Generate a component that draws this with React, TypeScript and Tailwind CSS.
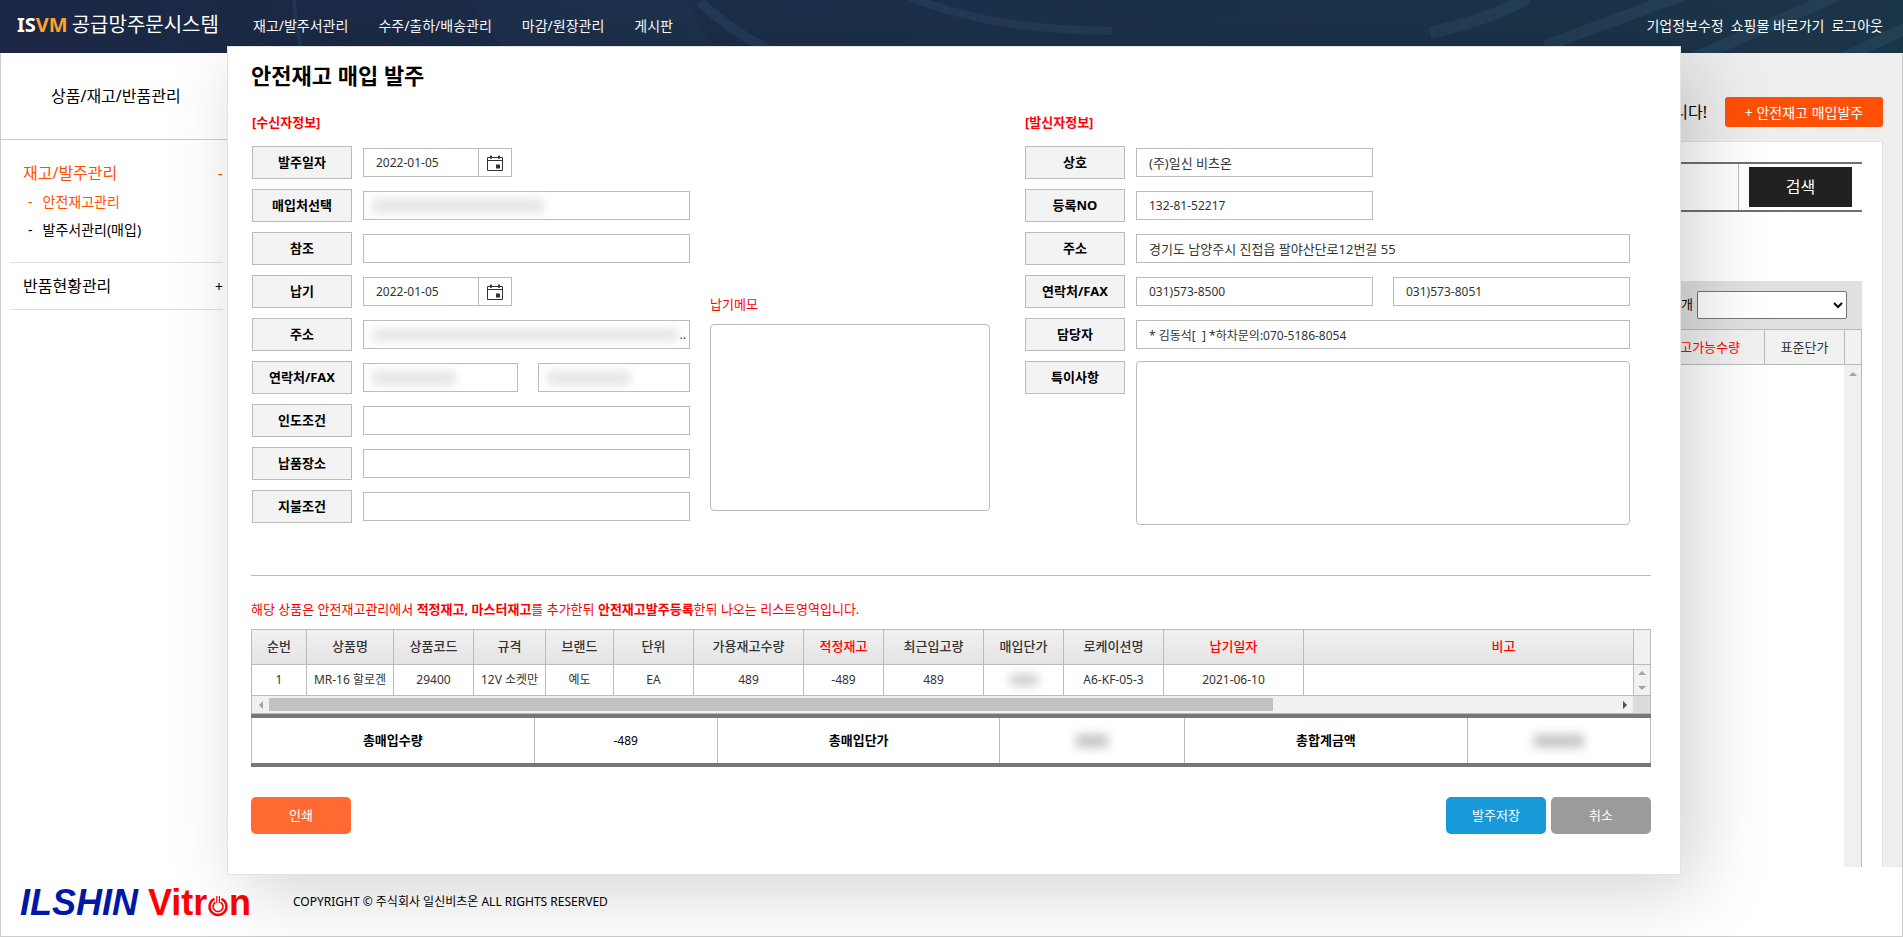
import type { ReactNode } from "react";

const field =
  "h-[29px] border border-[#bbb] bg-white px-3 text-[#333] outline-none";

function Caption({ htmlFor, children }: { htmlFor: string; children: ReactNode }) {
  return (
    <label
      htmlFor={htmlFor}
      className="flex h-[33px] w-[100px] shrink-0 items-center justify-center border border-[#bbb] bg-[#f3f3f3] text-[13px] font-bold text-black"
    >
      {children}
    </label>
  );
}

function Row({ id, label, children }: { id: string; label: string; children: ReactNode }) {
  return (
    <div className="flex items-center gap-[11px]">
      <Caption htmlFor={id}>{label}</Caption>
      {children}
    </div>
  );
}

function CalendarIcon() {
  return (
    <svg width="16" height="16" viewBox="0 0 16 16" fill="none" stroke="#333" aria-hidden="true">
      <path d="M0.5 2.5h15v13h-15zM0.5 5.5h15" />
      <path d="M4 0.5v3.5M12 0.5v3.5" strokeWidth="1.5" />
      <path d="M3 1.5h2M11 1.5h2" />
      <path d="M9 9.5h4v4H9z" fill="#333" stroke="none" />
    </svg>
  );
}

function DateField({ id, label }: { id: string; label: string }) {
  return (
    <div className="flex">
      <input id={id} className={`${field} w-[116px] text-[12px]`} defaultValue="2022-01-05" />
      <button
        type="button"
        aria-label={`${label} 달력`}
        className="flex h-[29px] w-[33px] items-center justify-center border border-l-0 border-[#bbb] bg-white"
      >
        <CalendarIcon />
      </button>
    </div>
  );
}

function Masked({ className }: { className: string }) {
  return <span className={`block rounded-sm bg-[#e8e8e8] blur-[4px] ${className}`} />;
}

function MaskedInput({
  id,
  label,
  className,
  mask,
  tail,
}: {
  id: string;
  label?: string;
  className: string;
  mask: string;
  tail?: string;
}) {
  return (
    <div className={`flex h-[29px] items-center border border-[#bbb] bg-white pl-2 ${className}`}>
      <Masked className={mask} />
      {tail && <span className="ml-auto pr-[3px] text-[12px] text-[#333]">{tail}</span>}
      <input id={id} aria-label={label} className="w-0 min-w-0 outline-none" />
    </div>
  );
}

function Arrow({ dir, dark }: { dir: "up" | "down" | "left" | "right"; dark?: boolean }) {
  const paths = {
    up: "M0 6l4-4 4 4z",
    down: "M0 2l4 4 4-4z",
    left: "M6 0l-4 4 4 4z",
    right: "M2 0l4 4-4 4z",
  };
  return (
    <svg width="8" height="8" viewBox="0 0 8 8" fill={dark ? "#505050" : "#a3a3a3"} aria-hidden="true">
      <path d={paths[dir]} />
    </svg>
  );
}

const columns: { name: string; width: string; red?: boolean; value: ReactNode }[] = [
  { name: "순번", width: "w-[55px]", value: "1" },
  { name: "상품명", width: "w-[87px]", value: "MR-16 할로겐" },
  { name: "상품코드", width: "w-[80px]", value: "29400" },
  { name: "규격", width: "w-[72px]", value: "12V 소켓만" },
  { name: "브랜드", width: "w-[68px]", value: "예도" },
  { name: "단위", width: "w-[80px]", value: "EA" },
  { name: "가용재고수량", width: "w-[110px]", value: "489" },
  { name: "적정재고", width: "w-[80px]", red: true, value: "-489" },
  { name: "최근입고량", width: "w-[100px]", value: "489" },
  {
    name: "매입단가",
    width: "w-[80px]",
    value: <span className="mx-auto block h-[12px] w-[28px] bg-[#d0d0d0] blur-[5px]" />,
  },
  { name: "로케이션명", width: "w-[100px]", value: "A6-KF-05-3" },
  { name: "납기일자", width: "w-[140px]", red: true, value: "2021-06-10" },
];

function Header() {
  const menu = ["재고/발주서관리", "수주/출하/배송관리", "마감/원장관리", "게시판"];
  return (
    <header className="relative h-[53px] bg-linear-to-r from-[#1b2744] via-[#1b304a] to-[#1b3548]">
      <svg
        className="absolute inset-0 h-full w-full"
        viewBox="0 0 1903 53"
        preserveAspectRatio="none"
        fill="none"
        stroke="#5f83a8"
        strokeOpacity="0.13"
        aria-hidden="true"
      >
        <path d="M294 0q2 25 8 53" strokeWidth="4" />
        <path d="M470 0l36 53h210l-30-53z" fill="#3f74a0" fillOpacity="0.06" stroke="none" />
        <path d="M700 2q30 28 74 51" strokeWidth="10" />
        <path d="M908 -4q80 34 204 35" strokeWidth="8" />
        <path d="M1545 46l140-52M1430 33q60-14 98-35" strokeWidth="12" />
        <path d="M1690 60l150-66M1840 60l70-34" strokeWidth="12" />
      </svg>
      <div className="relative flex h-[50px] items-center pl-[17px] pr-5 text-[14px] text-white">
        <a href="#home" className="flex w-[236px] gap-1 whitespace-nowrap text-[20px]">
          <strong>
            IS<span className="text-[#fda22c]">VM</span>
          </strong>
          공급망주문시스템
        </a>
        <nav className="flex gap-[30px]">
          {menu.map((m) => (
            <a key={m} href="#menu">
              {m}
            </a>
          ))}
        </nav>
        <div className="ml-auto flex gap-[7px]">
          <a href="#company">기업정보수정</a>
          <a href="#shop">쇼핑몰 바로가기</a>
          <a href="#logout">로그아웃</a>
        </div>
      </div>
    </header>
  );
}

function Sidebar() {
  return (
    <aside className="w-[226px] shrink-0 bg-white text-black">
      <h2 className="flex h-[87px] items-center border-b border-[#ccc] pl-[50px] text-[16px]">
        상품/재고/반품관리
      </h2>
      <div className="ml-[9px] mr-1 border-b border-[#e0e0e0] pb-[18px] pt-[21px]">
        <div className="flex h-6 items-center justify-between pl-[13px] text-[16px] text-[#ff4e00]">
          <a href="#stock">재고/발주관리</a>
          <span>-</span>
        </div>
        <ul className="pt-[3px] text-[14px] leading-7">
          <li className="pl-[18px] text-[#ff4e00]">
            -<a href="#safe" className="ml-[10px]">안전재고관리</a>
          </li>
          <li className="pl-[18px]">
            -<a href="#orders" className="ml-[10px]">발주서관리(매입)</a>
          </li>
        </ul>
      </div>
      <div className="ml-[9px] mr-1 flex h-[47px] items-center justify-between border-b border-[#e0e0e0] pl-[13px] text-[16px]">
        <a href="#returns">반품현황관리</a>
        <span className="text-[14px]">+</span>
      </div>
    </aside>
  );
}

function Background() {
  return (
    <main className="flex min-w-0 flex-1 flex-col bg-[#eee] pl-5 pr-[19px]">
      <div className="flex h-[88px] items-end justify-end gap-[18px] pb-[14px]">
        <p className="text-[16px] leading-[30px] text-black">안전재고를 관리하는 페이지입니다!</p>
        <button type="button" className="h-[30px] w-[158px] rounded-[3px] bg-[#ff5005] text-[14px] text-white">
          + 안전재고 매입발주
        </button>
      </div>
      <section className="flex flex-1 flex-col border border-b-0 border-[#e3e3e3] bg-white px-5 pt-5">
        <div className="flex h-[50px] items-stretch border-y-2 border-[#707070]">
          <input aria-label="검색어" className="min-w-0 flex-1 border-r border-[#bbb] outline-none" />
          <div className="flex items-center px-[10px]">
            <button type="button" className="h-10 w-[103px] bg-[#212121] text-[16px] text-white">
              검색
            </button>
          </div>
        </div>
        <div className="mt-[69px] flex h-12 items-center justify-end gap-1 bg-[#e0e0e0] pr-[15px] text-[13px]">
          <span>
            총 <span className="text-[#f00]">0</span>개
          </span>
          <select aria-label="정렬" className="h-7 w-[150px] rounded-xs border border-[#767676] bg-white" />
        </div>
        <div className="flex flex-1 flex-col border-x border-t border-[#bbb]">
          <div className="flex h-[35px] justify-end border-b border-[#bbb] bg-[#f1f1f1] text-[13px] leading-[34px]">
            <span className="w-[110px] border-r border-[#bbb] pr-6 text-right text-[#f00]">재고가능수량</span>
            <span className="w-20 border-r border-[#bbb] text-center text-[#333]">표준단가</span>
            <span className="w-4" />
          </div>
          <div className="ml-auto flex w-[17px] flex-1 justify-center bg-[#f0f0f0] pt-[5px]">
            <Arrow dir="up" />
          </div>
        </div>
      </section>
    </main>
  );
}

function Logo() {
  return (
    <svg
      width="234"
      height="50"
      viewBox="0 0 234 50"
      role="img"
      aria-label="ILSHIN Vitron"
      fontFamily="Liberation Sans, sans-serif"
      fontWeight="bold"
    >
      <text x="0" y="38" fontSize="36" fontStyle="italic" fill="#0019a5">
        ILSHIN
      </text>
      <g fill="#f00" fontSize="36">
        <text x="128" y="38">
          Vitr
        </text>
        <text x="209" y="38">
          n
        </text>
      </g>
      <g fill="none" stroke="#f00">
        <path d="M194.5 21.8a8.5 8.5 0 1 0 7 0" strokeWidth="2.4" />
        <path d="M195.5 25.3a5 5 0 1 0 5 0" strokeWidth="1.6" />
        <path d="M196.8 19v7M199.4 19v7" strokeWidth="1.2" />
      </g>
    </svg>
  );
}

function Summary() {
  return (
    <table className="w-full table-fixed border-collapse border-y-4 border-[#777] text-center text-black">
      <colgroup>
        <col className="w-[20.2%]" />
        <col className="w-[13.1%]" />
        <col className="w-[20.2%]" />
        <col className="w-[13.2%]" />
        <col className="w-[20.2%]" />
        <col />
      </colgroup>
      <tbody>
        <tr className="h-[49px]">
          <th className="border-x border-[#bbb] text-[13px]">총매입수량</th>
          <td className="border-x border-[#bbb] text-[12px]">-489</td>
          <th className="border-x border-[#bbb] text-[13px]">총매입단가</th>
          <td className="border-x border-[#bbb]">
            <span className="mx-auto block h-[14px] w-[32px] bg-[#c8c8c8] blur-[5px]" />
          </td>
          <th className="border-x border-[#bbb] text-[13px]">총합계금액</th>
          <td className="border-x border-[#bbb]">
            <span className="mx-auto block h-[14px] w-[50px] bg-[#c8c8c8] blur-[5px]" />
          </td>
        </tr>
      </tbody>
    </table>
  );
}

function OrderTable() {
  return (
    <div>
      <table className="w-full table-fixed border-collapse border border-[#bbb] text-center text-[#333]">
        <thead>
          <tr className="h-[35px] bg-linear-to-b from-[#f1f1f1] to-[#e5e3e4] text-[13px]">
            {columns.map((c) => (
              <th
                key={c.name}
                className={`border border-[#bbb] font-medium ${c.width} ${c.red ? "text-[#f00]" : ""}`}
              >
                {c.name}
              </th>
            ))}
            <th className="border border-[#bbb] pl-[70px] font-medium text-[#f00]">비고</th>
            <th className="w-[17px] border border-[#bbb] bg-[#f1f1f1]" />
          </tr>
        </thead>
        <tbody>
          <tr className="h-[31px] text-[12px]">
            {columns.map((c) => (
              <td key={c.name} className="overflow-hidden whitespace-nowrap border border-[#bbb]">
                {c.value}
              </td>
            ))}
            <td className="border border-[#bbb]" />
            <td className="bg-[#f1f1f1]">
              <div className="flex flex-col items-center gap-[7px]">
                <Arrow dir="up" />
                <Arrow dir="down" />
              </div>
            </td>
          </tr>
        </tbody>
      </table>
      <div className="flex h-[18px] items-center border-x border-b border-[#bbb] bg-[#f1f1f1]">
        <span className="flex w-[17px] justify-center">
          <Arrow dir="left" />
        </span>
        <div className="flex-1">
          <div className="h-[13px] w-[74.5%] bg-[#c1c1c1]" />
        </div>
        <span className="flex w-[17px] justify-center">
          <Arrow dir="right" dark />
        </span>
        <span className="h-full w-[17px] bg-[#dcdcdc]" />
      </div>
      <Summary />
    </div>
  );
}

function OrderDialog() {
  return (
    <div
      role="dialog"
      aria-labelledby="dialog-title"
      className="absolute left-[227px] right-[222px] top-[46px] border border-[#e3e3e3] bg-white pb-10 pl-[23px] pr-[29px] pt-[9px] shadow-[15px_15px_70px_rgba(0,0,0,0.18)]"
    >
      <h1 id="dialog-title" className="text-[22px] font-bold leading-[38px] text-black">
        안전재고 매입 발주
      </h1>
      <div className="flex pt-[18px]">
        <section className="flex w-[439px] shrink-0 flex-col gap-[10px] pl-px">
          <h3 className="mb-1 text-[13px] font-bold leading-5 text-[#f00]">[수신자정보]</h3>
          <Row id="order-date" label="발주일자">
            <DateField id="order-date" label="발주일자" />
          </Row>
          <Row id="vendor" label="매입처선택">
            <MaskedInput id="vendor" className="flex-1" mask="h-[16px] w-[172px]" />
          </Row>
          <Row id="ref" label="참조">
            <input id="ref" className={`${field} flex-1`} />
          </Row>
          <Row id="due" label="납기">
            <DateField id="due" label="납기" />
          </Row>
          <Row id="addr" label="주소">
            <MaskedInput id="addr" className="flex-1" mask="h-[14px] w-[306px]" tail=".." />
          </Row>
          <Row id="tel" label="연락처/FAX">
            <div className="flex flex-1 gap-5">
              <MaskedInput id="tel" className="w-[155px]" mask="h-[16px] w-[84px]" />
              <MaskedInput id="fax" label="FAX" className="flex-1" mask="h-[16px] w-[84px]" />
            </div>
          </Row>
          <Row id="terms" label="인도조건">
            <input id="terms" className={`${field} flex-1`} />
          </Row>
          <Row id="place" label="납품장소">
            <input id="place" className={`${field} flex-1`} />
          </Row>
          <Row id="pay" label="지불조건">
            <input id="pay" className={`${field} flex-1`} />
          </Row>
        </section>
        <section className="ml-5 flex w-[280px] flex-col pt-[182px]">
          <label htmlFor="memo" className="text-[13px] leading-5 text-[#f00]">
            납기메모
          </label>
          <textarea id="memo" className="mt-[10px] h-[187px] resize-none rounded-[4px] border border-[#bbb] outline-none" />
        </section>
        <section className="ml-[35px] mr-[21px] flex min-w-0 flex-1 flex-col gap-[10px]">
          <h3 className="mb-1 text-[13px] font-bold leading-5 text-[#f00]">[발신자정보]</h3>
          <Row id="company" label="상호">
            <input id="company" className={`${field} w-[237px] text-[13px]`} defaultValue="(주)일신 비츠온" />
          </Row>
          <Row id="regno" label="등록NO">
            <input id="regno" className={`${field} w-[237px] text-[12px]`} defaultValue="132-81-52217" />
          </Row>
          <Row id="sender-addr" label="주소">
            <input
              id="sender-addr"
              className={`${field} min-w-0 flex-1 text-[13px]`}
              defaultValue="경기도 남양주시 진접읍 팔야산단로12번길 55"
            />
          </Row>
          <Row id="sender-tel" label="연락처/FAX">
            <div className="flex min-w-0 flex-1 gap-5">
              <input id="sender-tel" className={`${field} w-[237px] text-[12px]`} defaultValue="031)573-8500" />
              <input
                aria-label="FAX"
                className={`${field} min-w-0 flex-1 text-[12px]`}
                defaultValue="031)573-8051"
              />
            </div>
          </Row>
          <Row id="manager" label="담당자">
            <input
              id="manager"
              className={`${field} min-w-0 flex-1 text-[12px]`}
              defaultValue="* 김동석[  ] *하차문의:070-5186-8054"
            />
          </Row>
          <div className="flex items-start gap-[11px]">
            <Caption htmlFor="note">특이사항</Caption>
            <textarea
              id="note"
              className="h-[164px] min-w-0 flex-1 resize-none rounded-[4px] border border-[#bbb] outline-none"
            />
          </div>
        </section>
      </div>
      <hr className="mt-[50px] border-[#bbb]" />
      <p className="mt-[23px] pb-[10px] text-[13px] leading-5 text-[#f00]">
        해당 상품은 안전재고관리에서 <b>적정재고, 마스터재고</b>를 추가한뒤 <b>안전재고발주등록</b>한뒤 나오는
        리스트영역입니다.
      </p>
      <OrderTable />
      <div className="flex gap-[5px] pt-[30px] text-[13px] text-white">
        <button type="button" className="mr-auto h-[37px] w-[100px] rounded-[5px] bg-[#ff6a33]">
          인쇄
        </button>
        <button type="button" className="h-[37px] w-[100px] rounded-[5px] bg-[#189ad8]">
          발주저장
        </button>
        <button type="button" className="h-[37px] w-[100px] rounded-[5px] bg-[#9b9b9b]">
          취소
        </button>
      </div>
    </div>
  );
}

export default function App() {
  return (
    <div className="relative flex min-h-screen flex-col overflow-hidden bg-white font-['Noto_Sans','Noto_Sans_CJK_KR',sans-serif]">
      <Header />
      <div className="flex flex-1 border-x border-[#ccc]">
        <Sidebar />
        <Background />
      </div>
      <footer className="flex h-[70px] items-center gap-[39px] border border-t-0 border-[#ccc] pl-[19px]">
        <Logo />
        <p className="text-[12px] text-black">COPYRIGHT © 주식회사 일신비츠온 ALL RIGHTS RESERVED</p>
      </footer>
      <OrderDialog />
    </div>
  );
}
